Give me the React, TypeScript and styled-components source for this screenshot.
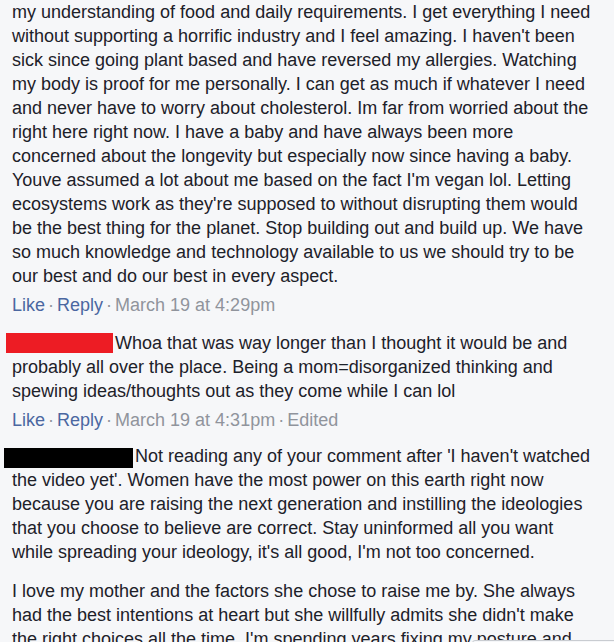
import React from 'react';
import styled, { createGlobalStyle } from 'styled-components';

const GlobalStyle = createGlobalStyle`
  html, body {
    margin: 0;
    padding: 0;
    overflow: hidden;
    background: #f6f7f9;
  }
`;

type Tone = 'red' | 'black';

type Comment = {
  author: string;
  redact: Tone | null;
  paragraphs: string[];
  time: string;
  edited?: boolean;
  gap?: number;
};

const COMMENTS: Comment[] = [
  {
    author: '',
    redact: null,
    paragraphs: [
      "my understanding of food and daily requirements. I get everything I need without supporting a horrific industry and I feel amazing. I haven't been sick since going plant based and have reversed my allergies. Watching my body is proof for me personally. I can get as much if whatever I need and never have to worry about cholesterol. Im far from worried about the right here right now. I have a baby and have always been more concerned about the longevity but especially now since having a baby. Youve assumed a lot about me based on the fact I'm vegan lol. Letting ecosystems work as they're supposed to without disrupting them would be the best thing for the planet. Stop building out and build up. We have so much knowledge and technology available to us we should try to be our best and do our best in every aspect.",
    ],
    time: 'March 19 at 4:29pm',
  },
  {
    author: 'Hidden Name',
    redact: 'red',
    paragraphs: [
      'Whoa that was way longer than I thought it would be and probably all over the place. Being a mom=disorganized thinking and spewing ideas/thoughts out as they come while I can lol',
    ],
    time: 'March 19 at 4:31pm',
    edited: true,
    gap: 12,
  },
  {
    author: 'Hidden Name',
    redact: 'black',
    paragraphs: [
      "Not reading any of your comment after 'I haven't watched the video yet'. Women have the most power on this earth right now because you are raising the next generation and instilling the ideologies that you choose to believe are correct. Stay uninformed all you want while spreading your ideology, it's all good, I'm not too concerned.",
      "I love my mother and the factors she chose to raise me by. She always had the best intentions at heart but she willfully admits she didn't make the right choices all the time. I'm spending years fixing my posture and",
    ],
    time: '',
  },
];

const Page = styled.div`
  width: 614px;
  height: 642px;
  overflow: hidden;
  box-sizing: border-box;
  padding: 0 17px 0 12px;
  font-family: 'Liberation Sans', Arial, sans-serif;
  font-size: 18px;
  line-height: 24px;
  color: #1d2129;
`;

const CommentBlock = styled.div<{ $gap: number }>`
  margin-bottom: ${(p) => p.$gap}px;
`;

const Paragraph = styled.p`
  margin: 0;

  & + & {
    margin-top: 15px;
  }
`;

const Redacted = styled.span<{ $tone: Tone }>`
  display: inline-block;
  vertical-align: top;
  margin-top: ${(p) => (p.$tone === 'red' ? '2px' : '4px')};
  margin-left: ${(p) => (p.$tone === 'red' ? '-6px' : '-8px')};
  margin-right: 2px;
  width: ${(p) => (p.$tone === 'red' ? '107px' : '129px')};
  height: 20px;
  background: ${(p) => (p.$tone === 'red' ? '#ed1c24' : '#000')};
`;

const Actions = styled.div`
  margin-top: 5px;
  color: #90949c;
`;

const ActionLink = styled.a`
  color: #4b67a1;
  text-decoration: none;
  cursor: pointer;
`;

const Dot = styled.span`
  padding: 0 3px;
`;

const ChatTab = styled.div`
  position: fixed;
  left: 472px;
  top: 640px;
  width: 160px;
  height: 40px;
  border: 1px solid #c9ccd1;
  border-radius: 3px 0 0 0;
  background: #f6f7f9;
`;

export default function App() {
  return (
    <>
      <GlobalStyle />
      <Page>
        {COMMENTS.map((c, i) => (
          <CommentBlock key={i} $gap={c.gap ?? 14}>
            {c.paragraphs.map((text, j) => (
              <Paragraph key={j}>
                {j === 0 && c.redact && <Redacted $tone={c.redact} title={c.author} />}
                {text}
              </Paragraph>
            ))}
            {c.time && (
              <Actions>
                <ActionLink>Like</ActionLink>
                <Dot>·</Dot>
                <ActionLink>Reply</ActionLink>
                <Dot>·</Dot>
                {c.time}
                {c.edited && (
                  <>
                    <Dot>·</Dot>Edited
                  </>
                )}
              </Actions>
            )}
          </CommentBlock>
        ))}
      </Page>
      <ChatTab />
    </>
  );
}
